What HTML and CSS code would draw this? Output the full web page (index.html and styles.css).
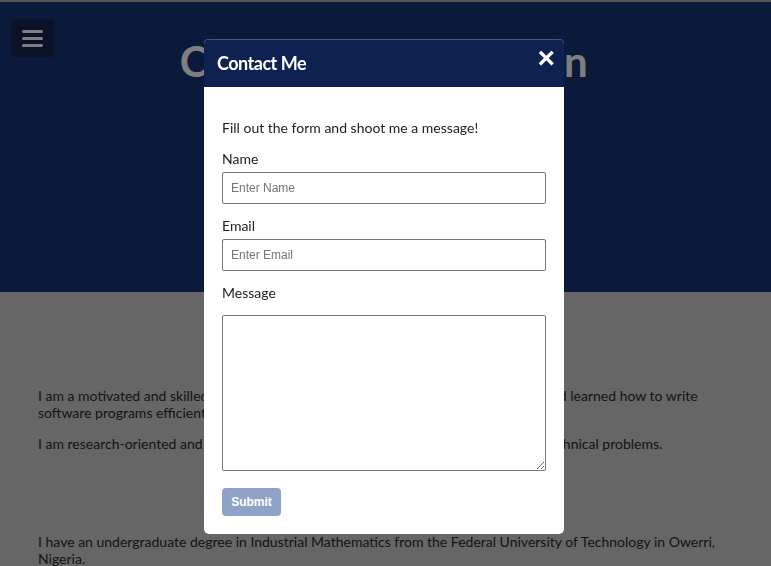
FILE: index.html
```html
<!DOCTYPE html>
<html lang="en">
<head>
<meta charset="utf-8">
<title>About</title>
<link rel="stylesheet" href="styles.css">
</head>
<body>
<header class="hero">
  <button class="menu-toggle" aria-label="Menu">
    <svg width="21" height="17" viewBox="0 0 21 17"><rect x="0" y="0" width="21" height="3" rx="1.5"/><rect x="0" y="7" width="21" height="3" rx="1.5"/><rect x="0" y="14" width="21" height="3" rx="1.5"/></svg>
  </button>
  <h1 class="hero-title">Chinedu Obi Jonathan</h1>
</header>
<main class="content">
  <h2 class="section-title">About Me</h2>
  <p>I am a motivated and skilled software developer. I have studied Computer Science, and learned how to write software programs efficiently and effectively.</p>
  <p>I am research-oriented and I like using my analytical skills to find good solutions to technical problems.</p>
  <h2 class="section-title second">Education</h2>
  <p>I have an undergraduate degree in Industrial Mathematics from the Federal University of Technology in Owerri, Nigeria.</p>
</main>
<div class="backdrop"></div>
<div class="modal" role="dialog">
  <div class="modal-header">
    <h3 class="modal-title">Contact Me</h3>
    <span class="modal-close">&times;</span>
  </div>
  <form class="modal-body">
    <p class="intro">Fill out the form and shoot me a message!</p>
    <label class="field-label" for="name">Name</label>
    <input class="field" id="name" type="text" placeholder="Enter Name">
    <label class="field-label" for="email">Email</label>
    <input class="field" id="email" type="email" placeholder="Enter Email">
    <label class="field-label" for="msg">Message</label>
    <textarea class="field area" id="msg"></textarea>
    <button class="submit" type="button">Submit</button>
  </form>
</div>
</body>
</html>
```
FILE: styles.css
```css
* { box-sizing: border-box; }
html, body { margin: 0; padding: 0; }
body {
  font-family: Lato, "Noto Sans", sans-serif;
  font-size: 14px;
  line-height: 1.2;
  color: #2a2a2a;
  background: #cccccc;
  height: 566px;
  overflow: hidden;
}
.hero {
  position: relative;
  height: 292px;
  background: #163476;
  border-top: 2px solid #aaaaaa;
  padding: 34px 4px 0 0;
  text-align: center;
}
.menu-toggle {
  position: absolute;
  left: 11px;
  top: 17px;
  width: 43px;
  height: 38px;
  border: 0;
  border-radius: 3px;
  background: #16244f;
  display: flex;
  align-items: center;
  justify-content: center;
  padding: 0;
}
.menu-toggle svg { fill: #ffffff; }
.hero-title {
  margin: 0;
  font-size: 42px;
  font-weight: 700;
  line-height: 1.2;
  letter-spacing: -0.3px;
  color: #ffffff;
}
.content { padding: 0 38px; }
.content p { margin: 14px 0; }
.section-title {
  margin: 40px 0 22px;
  font-size: 28px;
  line-height: 34px;
  text-align: center;
}
.section-title.second { margin: 24px 0 24px; }
.backdrop {
  position: fixed;
  inset: 0;
  background: rgba(0, 0, 0, 0.5);
}
.modal {
  position: fixed;
  top: 39px;
  left: 204px;
  width: 360px;
  background: #ffffff;
  border-radius: 5px;
  overflow: hidden;
}
.modal-header {
  height: 48px;
  background: #0e2150;
  border-top: 1px solid #46557a;
  display: flex;
  align-items: center;
  justify-content: space-between;
  padding: 0 9px 0 13px;
}
.modal-title {
  margin: 0;
  color: #ffffff;
  font-size: 18px;
  font-weight: 700;
  letter-spacing: -0.5px;
}
.modal-close {
  color: #ffffff;
  font-family: "Liberation Sans", Arial, sans-serif;
  font-weight: 700;
  font-size: 30px;
  line-height: 1;
  margin-top: -12px;
}
.modal-body {
  display: flex;
  flex-direction: column;
  align-items: flex-start;
  padding: 33px 18px 18px;
}
.intro { margin: 0 0 13px; color: #222; }
.field-label { line-height: 17px; margin-bottom: 5px; color: #222; }
.field {
  width: 324px;
  height: 32px;
  margin: 0 0 13px;
  border: 1px solid #767676;
  border-radius: 2px;
  padding: 0 8px;
  font-family: "Liberation Sans", Arial, sans-serif;
  font-size: 12px;
  color: #222;
}
.field::placeholder { color: #757575; }
.area {
  height: 156px;
  margin: 9px 0 0;
  resize: vertical;
}
.submit {
  margin-top: 17px;
  width: 59px;
  height: 28px;
  border: 0;
  border-radius: 4px;
  background: #8fa3c8;
  color: #ffffff;
  font-family: "Liberation Sans", Arial, sans-serif;
  font-weight: 700;
  font-size: 12px;
  padding: 0;
}
```
